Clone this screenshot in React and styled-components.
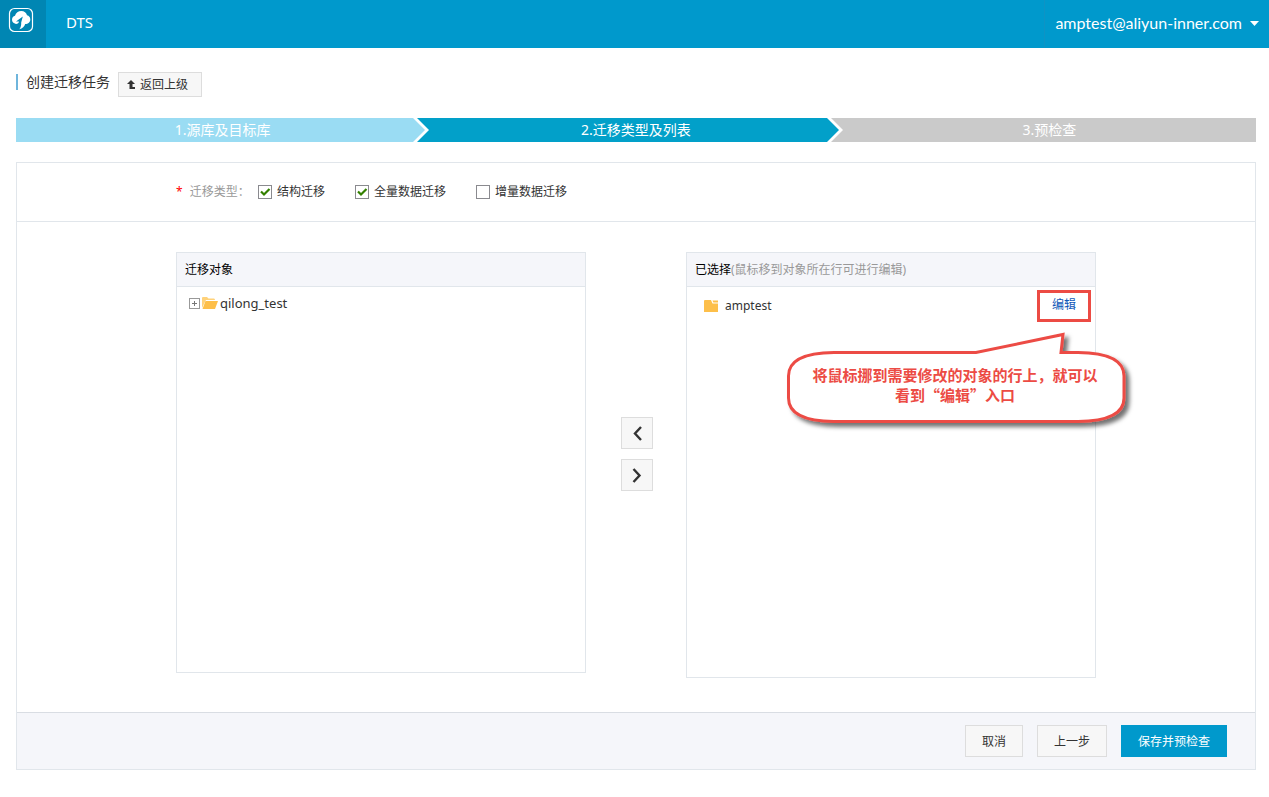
import React from "react";
import styled, { createGlobalStyle, css } from "styled-components";

const GlobalStyle = createGlobalStyle`
  *, *::before, *::after { box-sizing: border-box; }
  body {
    margin: 0;
    background: #fff;
    color: #333;
    font-family: "Noto Sans", "Noto Sans CJK SC", sans-serif;
    font-size: 12px;
    line-height: 18px;
  }
  button, input { font: inherit; }
`;

const TopBar = styled.header`
  display: flex;
  height: 48px;
  background: #0099cc;
  color: #fff;
  font-size: 15px;
  line-height: 20px;
`;

const LogoLink = styled.a`
  display: block;
  width: 46px;
  padding: 7px 8px;
  background: #0086b3;
  svg { display: block; }
`;

const ProductName = styled.div`
  flex: 1;
  padding: 12px 20px;
`;

const AccountButton = styled.button`
  display: flex;
  align-items: center;
  gap: 8px;
  padding: 0 10px 2px;
  border: 0;
  border-left: 1px solid #0f93c4;
  background: transparent;
  color: #fff;
  font-family: Lato, sans-serif;
  font-size: 16px;
  cursor: pointer;
`;

const Page = styled.main`
  padding: 24px 13px 27px 16px;
`;

const TitleRow = styled.div`
  display: flex;
  align-items: flex-start;
  gap: 8px;
`;

const Title = styled.h1`
  margin: 2px 0 0;
  padding-left: 8px;
  border-left: 2px solid #6fb5dc;
  font-size: 14px;
  font-weight: 400;
  line-height: 16px;
`;

const buttonLook = css`
  display: inline-flex;
  align-items: center;
  justify-content: center;
  border: 1px solid #ddd;
  background: #f7f7f7;
  color: #333;
  cursor: pointer;
`;

const BackButton = styled.button`
  ${buttonLook}
  gap: 5px;
  height: 25px;
  padding: 0 13px 0 8px;
`;

const Steps = styled.ol`
  display: flex;
  margin: 21px 0 20px;
  padding: 0;
  list-style: none;
`;

const Step = styled.li`
  position: relative;
  flex: 1;
  height: 24px;
  background: ${(p) => p.$fill};
  color: #fff;
  font-size: 14px;
  line-height: 24px;
  text-align: center;
`;

const StepArrow = styled.svg`
  position: absolute;
  top: 0;
  right: 0;
`;

const Panel = styled.form`
  border: 1px solid #e1e6eb;
`;

const TypeRow = styled.fieldset`
  display: flex;
  align-items: center;
  margin: 0;
  height: 59px;
  padding: 0 159px;
  border: 0;
  border-bottom: 1px solid #e1e6eb;
`;

const TypeLabel = styled.span`
  width: 82px;
  color: #999;
`;

const Required = styled.span`
  margin-right: 7px;
  color: #f00;
`;

const CheckLabel = styled.label`
  display: flex;
  align-items: center;
  gap: 5px;
  margin-right: 30px;
`;

const CheckBox = styled.input`
  appearance: none;
  width: 14px;
  height: 14px;
  margin: 0;
  border: 1px solid #8a8a8f;
  background: #fff;
  &:checked {
    background: #fff
      url("data:image/svg+xml,%3Csvg xmlns='http://www.w3.org/2000/svg' viewBox='0 0 12 12'%3E%3Cpath d='M2 5.5 L5 8.5 L10.5 3' fill='none' stroke='%23338000' stroke-width='2.2'/%3E%3C/svg%3E");
  }
`;

const Transfer = styled.div`
  display: flex;
  justify-content: center;
  align-items: flex-start;
  padding: 30px 0 34px;
`;

const List = styled.section`
  position: relative;
  width: 410px;
  min-height: ${(p) => p.$height}px;
  border: 1px solid #e1e6eb;
`;

const ListHead = styled.h2`
  margin: 0;
  height: 34px;
  padding: 0 8px;
  border-bottom: 1px solid #e1e6eb;
  background: #f5f6fa;
  color: #000;
  font-size: 12px;
  font-weight: 400;
  line-height: 33px;
`;

const Hint = styled.span`
  color: #999;
`;

const TreeRow = styled.div`
  display: flex;
  align-items: center;
  gap: 2px;
  padding: 7px 12px;
  font-size: 13px;
`;

const ExpandButton = styled.button`
  display: flex;
  padding: 0;
  border: 0;
  background: none;
`;

const SelectedRow = styled.div`
  display: flex;
  align-items: center;
  gap: 7px;
  padding: 3px 4px 0 16px;
`;

const RowName = styled.span`
  flex: 1;
`;

const EditLink = styled.a`
  width: 54px;
  height: 32px;
  border: 3px solid #ec4b44;
  color: #1058b8;
  line-height: 24px;
  text-align: center;
  text-decoration: none;
`;

const Callout = styled.div`
  position: absolute;
  top: 76px;
  left: 96px;
  width: 348px;
  padding: 36px 28px 0 24px;
  color: #ec4b44;
  font-size: 15px;
  font-weight: 700;
  line-height: 20px;
  text-align: center;
  font-family: "Noto Sans CJK SC", sans-serif;
`;

const CalloutShape = styled.svg`
  position: absolute;
  top: 0;
  left: 0;
`;

const CalloutText = styled.p`
  position: relative;
  margin: 0;
`;

const MoveButtons = styled.div`
  display: flex;
  flex-direction: column;
  align-items: center;
  gap: 10px;
  width: 102px;
  margin-right: -2px;
  padding-top: 165px;
`;

const MoveButton = styled.button`
  ${buttonLook}
  width: 32px;
  height: 32px;
  padding: 0;
`;

const Footer = styled.footer`
  display: flex;
  justify-content: flex-end;
  gap: 14px;
  padding: 12px 28px;
  border-top: 1px solid #d9dde3;
  background: #f5f6fa;
`;

const FooterButton = styled.button`
  ${buttonLook}
  height: 32px;
  padding: 2px 16px 0;
  ${(p) => p.$primary && css`
    border-color: #0099cc;
    background: #0099cc;
    color: #fff;
  `}
`;

const STEPS = [
  { text: "1.源库及目标库", fill: "#9adcf3", next: "#02a0c9" },
  { text: "2.迁移类型及列表", fill: "#02a0c9", next: "#cacaca" },
  { text: "3.预检查", fill: "#cacaca" },
];

const TYPES = [
  { id: "structure", text: "结构迁移", on: true },
  { id: "full", text: "全量数据迁移", on: true },
  { id: "incremental", text: "增量数据迁移", on: false },
];

function Logo() {
  return (
    <svg width="26" height="26" viewBox="0 0 26 26" aria-hidden="true">
      <rect x="1.5" y="1.5" width="23" height="23" rx="5" fill="none" stroke="#fff" strokeWidth="1.2" />
      <path
        d="M8 17 C5.500 16.500 4 14.800 4 12.800 C4 10.600 5.300 9.200 7 8.800 C7.800 5.800 10.300 4 13.300 4 C16.300 4 18.400 5.700 19 8.300 C21 8.700 22.300 10.200 22.300 12.400 C22.300 15 20.300 17 17.200 17 C16.500 19.500 14.500 21.500 11.300 22.300 C12.800 20.500 13.300 18.500 13.200 15.500 L14.800 9.500 L8 14.500 L11 14.500 C10.800 16 9.800 17 8 17 Z"
        fill="#fff"
      />
    </svg>
  );
}

export default function App() {
  return (
    <>
      <GlobalStyle />
      <TopBar>
        <LogoLink href="#" aria-label="首页"><Logo /></LogoLink>
        <ProductName>DTS</ProductName>
        <AccountButton type="button">
          amptest@aliyun-inner.com
          <svg width="9" height="5" viewBox="0 0 9 5" aria-hidden="true">
            <path d="M0 0 H9 L4.5 5 Z" fill="#fff" />
          </svg>
        </AccountButton>
      </TopBar>
      <Page lang="zh-CN">
        <TitleRow>
          <Title>创建迁移任务</Title>
          <BackButton type="button">
            <svg width="8" height="10" viewBox="0 0 8 10" aria-hidden="true">
              <path d="M4 0 L8 4 H5.500 V7 H8 V9 H2.500 V4 H0 Z" fill="#333" />
            </svg>
            返回上级
          </BackButton>
        </TitleRow>
        <Steps>
          {STEPS.map((s) => (
            <Step key={s.text} $fill={s.fill}>
              {s.text}
              {s.next && (
                <StepArrow width="16" height="24" viewBox="0 0 16 24" aria-hidden="true">
                  <rect width="16" height="24" fill={s.next} />
                  <path d="M0 0 H4 L16 12 L4 24 H0 Z" fill="#fff" />
                  <path d="M0 0 L12 12 L0 24 Z" fill={s.fill} />
                </StepArrow>
              )}
            </Step>
          ))}
        </Steps>
        <Panel>
          <TypeRow aria-label="迁移类型">
            <TypeLabel><Required>*</Required>迁移类型：</TypeLabel>
            {TYPES.map((t) => (
              <CheckLabel key={t.id} htmlFor={t.id}>
                <CheckBox id={t.id} type="checkbox" defaultChecked={t.on} />
                {t.text}
              </CheckLabel>
            ))}
          </TypeRow>
          <Transfer>
            <List $height={421}>
              <ListHead>迁移对象</ListHead>
              <TreeRow>
                <ExpandButton type="button" aria-label="展开">
                  <svg width="11" height="11" viewBox="0 0 11 11">
                    <rect x="0.5" y="0.5" width="10" height="10" fill="#fff" stroke="#999" />
                    <path d="M3 5.500 H8 M5.500 3 V8" stroke="#777" />
                  </svg>
                </ExpandButton>
                <svg width="16" height="12" viewBox="0 0 16 12" aria-hidden="true">
                  <path d="M0 11 V1 Q0 0 1 0 H5 L6.500 1.500 H12 Q13 1.500 13 3 H4 Z" fill="#ffd27a" />
                  <path d="M3.500 4 H16 L13 12 H0.500 Z" fill="#fdbf4a" />
                </svg>
                qilong_test
              </TreeRow>
            </List>
            <MoveButtons>
              <MoveButton type="button" aria-label="移回">
                <svg width="10" height="16" viewBox="0 0 10 16">
                  <path d="M9 2 L3 8.500 L9 15" fill="none" stroke="#333" strokeWidth="2.4" />
                </svg>
              </MoveButton>
              <MoveButton type="button" aria-label="移入">
                <svg width="10" height="16" viewBox="0 0 10 16">
                  <path d="M1.500 2 L7.500 8.500 L1.500 15" fill="none" stroke="#333" strokeWidth="2.4" />
                </svg>
              </MoveButton>
            </MoveButtons>
            <List $height={426}>
              <ListHead>已选择<Hint>(鼠标移到对象所在行可进行编辑)</Hint></ListHead>
              <SelectedRow>
                <svg width="15" height="12" viewBox="0 0 15 12" aria-hidden="true">
                  <path d="M1 1 Q1 0 2 0 H8 L9.500 3.500 H15 V12 H1 Z" fill="#fdbf4a" />
                  <path d="M9.500 0.500 H15 V2.500 H10.300 Z" fill="#fdbf4a" />
                </svg>
                <RowName>amptest</RowName>
                <EditLink href="#">编辑</EditLink>
              </SelectedRow>
              <Callout>
                <CalloutShape width="352" height="104" viewBox="0 0 352 104" aria-hidden="true">
                  <defs>
                    <filter id="calloutShadow" x="-5%" y="-10%" width="115%" height="130%">
                      <feDropShadow dx="4" dy="4" stdDeviation="2" floodColor="#000" floodOpacity="0.55" />
                    </filter>
                  </defs>
                  <path
                    d="M51 23.500 H193 L280 5.500 L278 23.500 H295 Q341 24 341 47 V69 Q341 92 295 92.500 H51 Q5.500 92 5.500 69 V47 Q5.500 24 51 23.500 Z"
                    fill="#fff"
                    stroke="#ec4b44"
                    strokeWidth="3"
                    filter="url(#calloutShadow)"
                  />
                </CalloutShape>
                <CalloutText>将鼠标挪到需要修改的对象的行上，就可以看到“编辑”入口</CalloutText>
              </Callout>
            </List>
          </Transfer>
          <Footer>
            <FooterButton type="button">取消</FooterButton>
            <FooterButton type="button">上一步</FooterButton>
            <FooterButton type="submit" $primary>保存并预检查</FooterButton>
          </Footer>
        </Panel>
      </Page>
    </>
  );
}
